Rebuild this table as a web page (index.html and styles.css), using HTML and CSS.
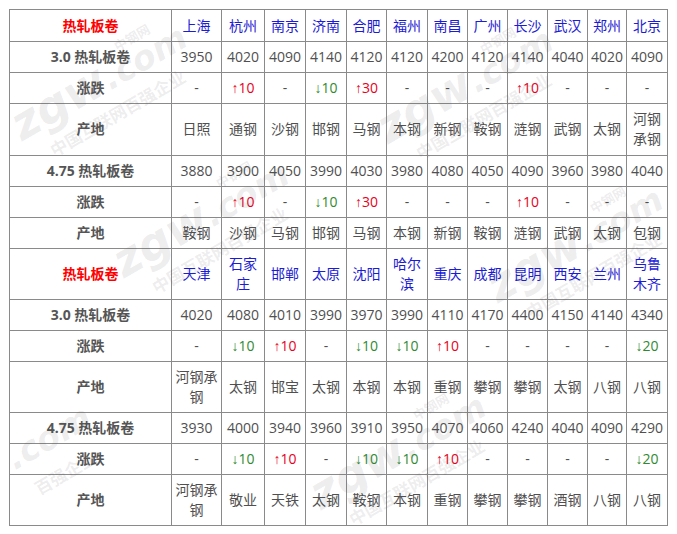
FILE: index.html
```html
<!DOCTYPE html>
<html lang="zh-CN">
<head>
<meta charset="utf-8">
<title>热轧板卷价格</title>
<link rel="stylesheet" href="styles.css">
</head>
<body>
<div class="page">
<table class="price">
<colgroup>
<col class="c-label"><col class="c-w50"><col class="c-w43"><col class="c-w41"><col class="c-w41"><col class="c-w40"><col class="c-w41"><col class="c-w40"><col class="c-w40"><col class="c-w40"><col class="c-w40"><col class="c-w39"><col class="c-w41">
</colgroup>
<tbody>
<tr class="head"><td class="title">热轧板卷</td><td>上海</td><td>杭州</td><td>南京</td><td>济南</td><td>合肥</td><td>福州</td><td>南昌</td><td>广州</td><td>长沙</td><td>武汉</td><td>郑州</td><td>北京</td></tr>
<tr><td class="label">3.0 热轧板卷</td><td>3950</td><td>4020</td><td>4090</td><td>4140</td><td>4120</td><td>4120</td><td>4200</td><td>4120</td><td>4140</td><td>4040</td><td>4020</td><td>4090</td></tr>
<tr><td class="label">涨跌</td><td>-</td><td class="up"><span class="ar">↑</span>10</td><td>-</td><td class="down"><span class="ar">↓</span>10</td><td class="up"><span class="ar">↑</span>30</td><td>-</td><td>-</td><td>-</td><td class="up"><span class="ar">↑</span>10</td><td>-</td><td>-</td><td>-</td></tr>
<tr class="tall"><td class="label">产地</td><td>日照</td><td>通钢</td><td>沙钢</td><td>邯钢</td><td>马钢</td><td>本钢</td><td>新钢</td><td>鞍钢</td><td>涟钢</td><td>武钢</td><td>太钢</td><td>河钢承钢</td></tr>
<tr><td class="label">4.75 热轧板卷</td><td>3880</td><td>3900</td><td>4050</td><td>3990</td><td>4030</td><td>3980</td><td>4080</td><td>4050</td><td>4090</td><td>3960</td><td>3980</td><td>4040</td></tr>
<tr><td class="label">涨跌</td><td>-</td><td class="up"><span class="ar">↑</span>10</td><td>-</td><td class="down"><span class="ar">↓</span>10</td><td class="up"><span class="ar">↑</span>30</td><td>-</td><td>-</td><td>-</td><td class="up"><span class="ar">↑</span>10</td><td>-</td><td>-</td><td>-</td></tr>
<tr><td class="label">产地</td><td>鞍钢</td><td>沙钢</td><td>马钢</td><td>邯钢</td><td>马钢</td><td>本钢</td><td>新钢</td><td>鞍钢</td><td>涟钢</td><td>武钢</td><td>太钢</td><td>包钢</td></tr>
<tr class="head"><td class="title">热轧板卷</td><td>天津</td><td>石家庄</td><td>邯郸</td><td>太原</td><td>沈阳</td><td>哈尔滨</td><td>重庆</td><td>成都</td><td>昆明</td><td>西安</td><td>兰州</td><td>乌鲁木齐</td></tr>
<tr><td class="label">3.0 热轧板卷</td><td>4020</td><td>4080</td><td>4010</td><td>3990</td><td>3970</td><td>3990</td><td>4110</td><td>4170</td><td>4400</td><td>4150</td><td>4140</td><td>4340</td></tr>
<tr><td class="label">涨跌</td><td>-</td><td class="down"><span class="ar">↓</span>10</td><td class="up"><span class="ar">↑</span>10</td><td>-</td><td class="down"><span class="ar">↓</span>10</td><td class="down"><span class="ar">↓</span>10</td><td class="up"><span class="ar">↑</span>10</td><td>-</td><td>-</td><td>-</td><td>-</td><td class="down"><span class="ar">↓</span>20</td></tr>
<tr><td class="label">产地</td><td>河钢承钢</td><td>太钢</td><td>邯宝</td><td>太钢</td><td>本钢</td><td>本钢</td><td>重钢</td><td>攀钢</td><td>攀钢</td><td>太钢</td><td>八钢</td><td>八钢</td></tr>
<tr><td class="label">4.75 热轧板卷</td><td>3930</td><td>4000</td><td>3940</td><td>3960</td><td>3910</td><td>3950</td><td>4070</td><td>4060</td><td>4240</td><td>4040</td><td>4090</td><td>4290</td></tr>
<tr><td class="label">涨跌</td><td>-</td><td class="down"><span class="ar">↓</span>10</td><td class="up"><span class="ar">↑</span>10</td><td>-</td><td class="down"><span class="ar">↓</span>10</td><td class="down"><span class="ar">↓</span>10</td><td class="up"><span class="ar">↑</span>10</td><td>-</td><td>-</td><td>-</td><td>-</td><td class="down"><span class="ar">↓</span>20</td></tr>
<tr><td class="label">产地</td><td>河钢承钢</td><td>敬业</td><td>天铁</td><td>太钢</td><td>鞍钢</td><td>本钢</td><td>重钢</td><td>攀钢</td><td>攀钢</td><td>酒钢</td><td>八钢</td><td>八钢</td></tr>
</tbody>
</table>
<svg class="watermark" width="677" height="534" viewBox="0 0 677 534" aria-hidden="true">
<g transform="translate(106 93) rotate(-30)">
<text x="0" y="0" text-anchor="middle" class="wm-big">zgw<tspan class="wm-com">.com</tspan></text>
<text x="50" y="-30" text-anchor="middle" class="wm-cn">中钢网</text>
<text x="0" y="30" text-anchor="middle" class="wm-sub">中国互联网百强企业</text>
</g>
<g transform="translate(472 96) rotate(-30)">
<text x="0" y="0" text-anchor="middle" class="wm-big">zgw<tspan class="wm-com">.com</tspan></text>
<text x="50" y="-30" text-anchor="middle" class="wm-cn">中钢网</text>
<text x="0" y="30" text-anchor="middle" class="wm-sub">中国互联网百强企业</text>
</g>
<g transform="translate(208 230) rotate(-30)">
<text x="0" y="0" text-anchor="middle" class="wm-big">zgw<tspan class="wm-com">.com</tspan></text>
<text x="50" y="-30" text-anchor="middle" class="wm-cn">中钢网</text>
<text x="0" y="30" text-anchor="middle" class="wm-sub">中国互联网百强企业</text>
</g>
<g transform="translate(582 255) rotate(-30)">
<text x="0" y="0" text-anchor="middle" class="wm-big">zgw<tspan class="wm-com">.com</tspan></text>
<text x="50" y="-30" text-anchor="middle" class="wm-cn">中钢网</text>
<text x="0" y="30" text-anchor="middle" class="wm-sub">中国互联网百强企业</text>
</g>
<g transform="translate(405 462) rotate(-30)">
<text x="0" y="0" text-anchor="middle" class="wm-big">zgw<tspan class="wm-com">.com</tspan></text>
<text x="50" y="-30" text-anchor="middle" class="wm-cn">中钢网</text>
<text x="0" y="30" text-anchor="middle" class="wm-sub">中国互联网百强企业</text>
</g>
<g transform="translate(12 472) rotate(-30)">
<text x="49" y="0" text-anchor="middle" class="wm-big wm-com">.com</text>
<text x="46" y="34" text-anchor="middle" class="wm-sub">百强企业</text>
</g>
</svg>
</div>
</body>
</html>
```
FILE: styles.css
```css
html, body {
  margin: 0;
  padding: 0;
  background: #ffffff;
}
.page {
  position: relative;
  width: 677px;
  height: 534px;
  padding: 9px 0 0 9px;
  box-sizing: border-box;
}
.price {
  border-collapse: collapse;
  table-layout: fixed;
  width: 659px;
  border: 1px solid #333;
  font-family: "Open Sans", "Noto Sans CJK SC", sans-serif;
  font-size: 14px;
  color: #505050;
}
.c-label { width: 162px; }
.c-w50 { width: 50px; }
.c-w43 { width: 43px; }
.c-w41 { width: 41px; }
.c-w40 { width: 40px; }
.c-w39 { width: 39px; }
.price td {
  border: 1px solid #8a8a8a;
  padding: 5px 2px;
  line-height: 20px;
  text-align: center;
  vertical-align: middle;
  word-break: break-all;
}
.price tr.head td {
  color: #1c1cd4;
}
.price tr.head td.title {
  color: #ff0000;
  font-weight: bold;
}
.price td.label {
  font-weight: bold;
  color: #555;
}
.price tr:first-child td {
  padding-top: 6px;
}
.price tr.tall td {
  padding-bottom: 6px;
}
.price td.up {
  color: #e8001c;
}
.price td.down {
  color: #2f8a2f;
}
.ar {
  font-family: "Liberation Sans", sans-serif;
}
.watermark {
  position: absolute;
  left: 0;
  top: 0;
  pointer-events: none;
}
.wm-big {
  font-family: "DejaVu Sans", sans-serif;
  font-weight: bold;
  font-style: italic;
  font-size: 46px;
  fill: rgba(80, 80, 80, 0.11);
}
.wm-com {
  font-size: 34px;
}
.wm-cn {
  font-family: "Noto Sans CJK SC", sans-serif;
  font-weight: bold;
  font-size: 13px;
  fill: rgba(80, 80, 80, 0.11);
}
.wm-sub {
  font-family: "Noto Sans CJK SC", sans-serif;
  font-weight: bold;
  font-size: 17px;
  fill: rgba(80, 80, 80, 0.11);
}
```
